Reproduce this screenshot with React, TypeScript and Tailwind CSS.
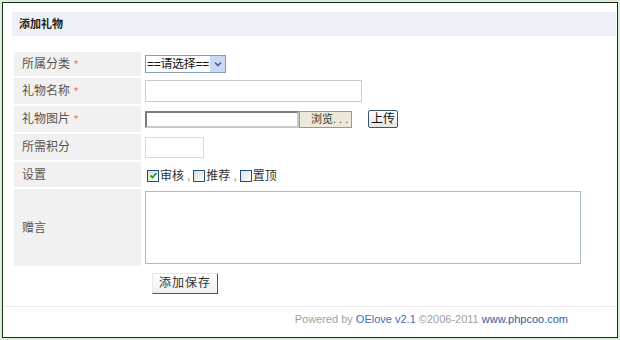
import type { ReactNode } from "react";

const font = { fontFamily: '"Liberation Sans", "Noto Sans CJK SC", sans-serif' };

function Row({ label, required, h, children }: { label: string; required?: boolean; h: string; children?: ReactNode }) {
  return (
    <div className={`flex ${h}`}>
      <div className="flex w-[127px] shrink-0 items-center bg-[#f1f1f1] pl-[8px] text-[12px] text-[#555]">
        {label}
        {required && <span className="ml-[4px] text-[11px] text-[#ec6a6c]">*</span>}
      </div>
      <div className="flex flex-1 items-center pl-[4px]">{children}</div>
    </div>
  );
}

function Check({ checked, label, last }: { checked?: boolean; label: string; last?: boolean }) {
  return (
    <span className="flex items-center">
      <span className="flex h-[12px] w-[12px] items-center justify-center border border-[#1c5180] bg-gradient-to-br from-[#dcdcd7] to-white">
        {checked && (
          <svg width="9" height="9" viewBox="0 0 9 9">
            <path d="M1.5 4.5 L3.5 6.5 L7.5 2" fill="none" stroke="#21a121" strokeWidth="1.8" />
          </svg>
        )}
      </span>
      <span className="ml-[1px] text-[12px] text-[#333]">{label}</span>
      {!last && <span className="mx-[3px] text-[12px] text-[#888]">,</span>}
    </span>
  );
}

export default function App() {
  return (
    <div className="h-[340px] w-[620px] bg-[#d9edd9] p-[2px]" style={font}>
      <div className="flex h-full flex-col border border-[#1d2a1d] bg-white">
        <div className="mt-[9px] ml-[9px] mr-[1px] flex h-[24px] items-center bg-[#eef1f8] pl-[7px] text-[11px] font-bold text-[#222]">
          添加礼物
        </div>

        <div className="mt-[16px] ml-[11px] mr-[4px] flex flex-col gap-[2px]">
          <Row label="所属分类" required h="h-[24px]">
            <div className="flex h-[18px] w-[81px] items-center border border-[#7f9db9] bg-white">
              <span className="flex-1 overflow-hidden whitespace-nowrap pl-[1px] text-[12px] leading-none tracking-[-0.3px] text-[#111]">
                ==请选择==
              </span>
              <span className="flex h-full w-[15px] shrink-0 items-center justify-center bg-[#c9d8f5]">
                <svg width="8" height="6" viewBox="0 0 8 6">
                  <path d="M1 1.5 L4 4.5 L7 1.5" fill="none" stroke="#4d6185" strokeWidth="1.6" />
                </svg>
              </span>
            </div>
          </Row>
          <Row label="礼物名称" required h="h-[26px]">
            <div className="h-[22px] w-[217px] border border-[#cbcbcb] bg-white" />
          </Row>
          <Row label="礼物图片" required h="h-[26px]">
            <div className="h-[17px] w-[154px] border-2 border-[#7d7d7d] border-b-[#c9c9c9] border-r-[#c9c9c9] bg-white" />
            <button className="h-[17px] w-[53px] border border-[#9a9a8a] bg-[#ece9d8] pl-[11px] text-left text-[11px] leading-none text-[#333]">
              浏览. . .
            </button>
            <button className="ml-[16px] h-[18px] w-[30px] rounded-[2px] border border-[#3b5470] bg-gradient-to-b from-white to-[#e6e6e0] text-[12px] leading-none text-[#111]">
              上传
            </button>
          </Row>
          <Row label="所需积分" h="h-[26px]">
            <div className="h-[21px] w-[59px] border border-[#dadada] bg-white" />
          </Row>
          <Row label="设置" h="h-[25px]">
            <div className="flex items-center pl-[2px] pt-[2px]">
              <Check checked label="审核" />
              <Check label="推荐" />
              <Check label="置顶" last />
            </div>
          </Row>
          <Row label="赠言" h="h-[77px]">
            <div className="h-[73px] w-[436px] border border-[#a6bccc] bg-white" />
          </Row>
        </div>

        <div className="mt-[4px] ml-[149px]">
          <button className="h-[21px] w-[66px] border border-[#e8e8e8] border-b-[#555] border-r-[#555] bg-gradient-to-b from-white to-[#efefef] text-[12px] tracking-[1px] text-[#333]">
            添加保存
          </button>
        </div>

        <div className="mt-[12px] flex h-[25px] items-center justify-end border-t border-[#ececec] pr-[49px] text-[11px] text-[#a0a0a0]">
          Powered by&nbsp;<span className="text-[#3a6fb5]">OElove v2.1</span>&nbsp;©2006-2011&nbsp;
          <span className="text-[#2d5e9e]">www.phpcoo.com</span>
        </div>
      </div>
    </div>
  );
}
